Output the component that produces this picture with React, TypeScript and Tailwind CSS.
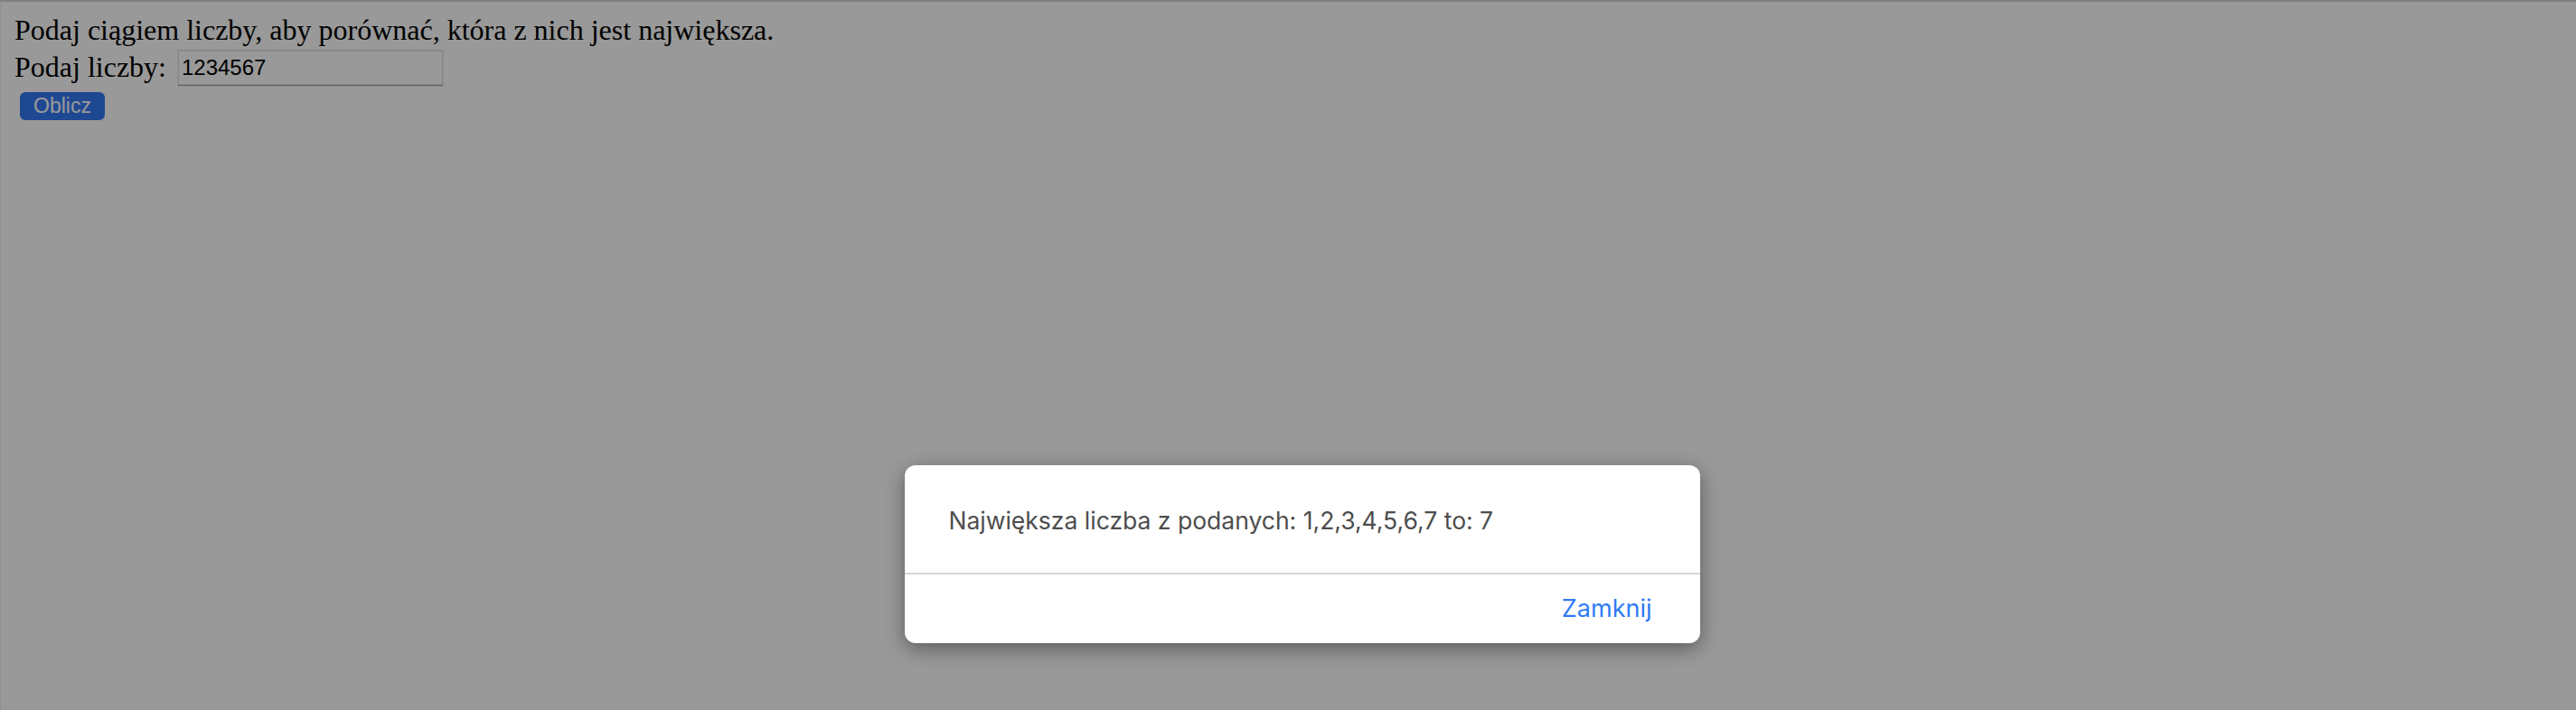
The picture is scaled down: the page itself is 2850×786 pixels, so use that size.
import { useState } from 'react'

const SERIF = { fontFamily: '"Liberation Serif", "Times New Roman", serif' }

export default function App() {
  const [value, setValue] = useState('1234567')
  const digits = value.split('').join(',')
  const max = Math.max(...value.split('').map(Number))

  return (
    <div className="relative h-[786px] w-full overflow-hidden border-t-2 border-l border-t-[#7f7f7f] border-l-[#8f8f8f] bg-white">
      {/* page content */}
      <div className="px-[15px] pt-[14px] text-[32px] leading-[35px] text-black" style={SERIF}>
        <div>Podaj ciągiem liczby, aby porównać, która z nich jest największa.</div>
        <div className="mt-[4px] flex items-center gap-[13px]">
          <span>Podaj liczby:</span>
          <input
            value={value}
            onChange={(e) => setValue(e.target.value)}
            className="h-[39px] w-[293px] border border-[#dedede] bg-white px-[3px] font-['Liberation_Sans',Arial,sans-serif] text-[24px] text-black shadow-[inset_0_1px_0_#e8e8e8,0_1px_1px_rgba(0,0,0,0.35)] outline-none"
          />
        </div>
        <button className="mt-[8px] ml-[6px] flex h-[31px] items-center rounded-[6px] bg-[#3479f5] px-[15px] font-['Liberation_Sans',Arial,sans-serif] text-[23px] leading-none text-white">
          Oblicz
        </button>
      </div>

      {/* modal backdrop */}
      <div className="absolute inset-0 flex justify-center bg-black/40 pt-[513px] pl-[30px]">
        <div className="h-[197px] w-[880px] overflow-hidden rounded-[12px] bg-white shadow-[0_6px_22px_rgba(0,0,0,0.4)] font-['Inter',sans-serif]">
          <div className="flex h-[119px] items-center pl-[49px] pt-[5px] text-[26.5px] text-[#4d4d4d]">
            Największa liczba z podanych: {digits} to: {max}
          </div>
          <div className="h-[2px] bg-[#d5d5d5]" />
          <div className="flex h-[76px] items-center justify-end pr-[53px]">
            <button className="text-[27px] text-[#2f7bf6]">Zamknij</button>
          </div>
        </div>
      </div>
    </div>
  )
}
